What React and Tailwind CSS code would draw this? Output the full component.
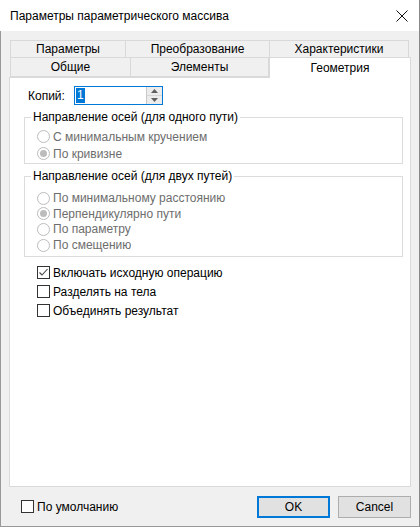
import React from "react";

const Radio = ({ label, checked, h = "h-[16px]" }) => (
  <div className={`flex items-center ${h}`}>
    <span className="w-[13px] h-[13px] rounded-full border border-[#bcbcbc] bg-white flex items-center justify-center">
      {checked && <span className="w-[7px] h-[7px] rounded-full bg-[#bcbcbc]" />}
    </span>
    <span className="ml-[3px] text-[#6d6d6d]">{label}</span>
  </div>
);

const Check = ({ label, checked }) => (
  <div className="flex items-center h-[19px]">
    <span className="w-[13px] h-[13px] border border-[#333] bg-white flex items-center justify-center">
      {checked && (
        <svg width="11" height="11" viewBox="0 0 11 11">
          <path d="M1.5 5.5 L4 8 L9.5 2" fill="none" stroke="#444" strokeWidth="1.1" />
        </svg>
      )}
    </span>
    <span className="ml-[3px]">{label}</span>
  </div>
);

const Group = ({ title, className, children }) => (
  <div className={`relative border border-[#dcdcdc] ${className}`}>
    <span className="absolute -top-[9px] left-[6px] bg-white px-[2px] leading-[16px]">{title}</span>
    {children}
  </div>
);

export default function App() {
  return (
    <div className="w-[420px] h-[527px] flex flex-col text-[12px] text-[#000] font-['Liberation_Sans',Arial,sans-serif] border-r border-[#888] bg-[#f0f0f0]">
      <div className="h-[31px] bg-white flex items-center pl-[10px] pr-[10px] shrink-0">
        <span className="flex-1">Параметры параметрического массива</span>
        <svg width="12" height="12" viewBox="0 0 12 12" className="mr-[1px]">
          <path d="M0.5 0.5 L11.5 11.5 M11.5 0.5 L0.5 11.5" stroke="#111" strokeWidth="1" />
        </svg>
      </div>
      <div className="flex-1 flex flex-col border-l border-b border-[#999]">
        <div className="pt-[9px] pl-[8px]">
          <div className="flex h-[18px] ml-[1px]">
            <div className="w-[116px] border border-[#d9d9d9] flex items-center justify-center">Параметры</div>
            <div className="w-[144px] border border-l-0 border-[#d9d9d9] flex items-center justify-center">Преобразование</div>
            <div className="w-[139px] border border-l-0 border-[#d9d9d9] flex items-center justify-center">Характеристики</div>
          </div>
          <div className="flex items-end ml-[1px]">
            <div className="w-[121px] h-[19px] border border-t-0 border-[#d9d9d9] flex items-center justify-center">Общие</div>
            <div className="w-[138px] h-[19px] border border-t-0 border-l-0 border-[#d9d9d9] flex items-center justify-center">Элементы</div>
            <div className="relative z-10 w-[142px] h-[21px] -mt-[2px] -mb-[1px] bg-white border border-b-0 border-[#d9d9d9] flex items-start justify-center pt-[1px]">Геометрия</div>
          </div>
        </div>
        <div className="ml-[8px] w-[402px] h-[410px] bg-white border border-[#d9d9d9] pl-[14px] pt-[8px]">
          <div className="flex items-center">
            <span className="ml-[4px] w-[46px]">Копий:</span>
            <div className="flex w-[89px] h-[19px] border border-[#0078d7]">
              <div className="flex-1 flex items-center pl-[1px]">
                <span className="bg-[#0078d7] text-white px-[1px] leading-[15px]">1</span>
              </div>
              <div className="w-[16px] flex flex-col border-l border-[#c8c8c8] bg-[#ececec]">
                <div className="flex-1 flex items-center justify-center border-b border-[#d6d6d6]">
                  <svg width="7" height="4" viewBox="0 0 7 4"><path d="M0 4 L3.5 0 L7 4 Z" fill="#606060" /></svg>
                </div>
                <div className="flex-1 flex items-center justify-center">
                  <svg width="7" height="4" viewBox="0 0 7 4"><path d="M0 0 L3.5 4 L7 0 Z" fill="#606060" /></svg>
                </div>
              </div>
            </div>
          </div>
          <Group title="Направление осей (для одного пути)" className="mt-[12px] w-[379px] h-[47px] pl-[12px] pt-[10px]">
            <Radio label="С минимальным кручением" h="h-[17px]" />
            <Radio label="По кривизне" checked h="h-[17px]" />
          </Group>
          <Group title="Направление осей (для двух путей)" className="mt-[12px] w-[379px] h-[81px] pl-[12px] pt-[13px]">
            <Radio label="По минимальному расстоянию" />
            <Radio label="Перпендикулярно пути" checked h="h-[15px]" />
            <Radio label="По параметру" />
            <Radio label="По смещению" />
          </Group>
          <div className="pl-[13px] pt-[6px]">
            <Check label="Включать исходную операцию" checked />
            <Check label="Разделять на тела" />
            <Check label="Объединять результат" />
          </div>
        </div>
        <div className="flex-1 flex items-center pl-[20px] pr-[8px]">
          <Check label="По умолчанию" />
          <div className="flex-1" />
          <button className="w-[73px] h-[22px] bg-[#e1e1e1] border-2 border-[#0078d7]">OK</button>
          <button className="ml-[8px] w-[73px] h-[22px] bg-[#e1e1e1] border border-[#adadad]">Cancel</button>
        </div>
      </div>
    </div>
  );
}
